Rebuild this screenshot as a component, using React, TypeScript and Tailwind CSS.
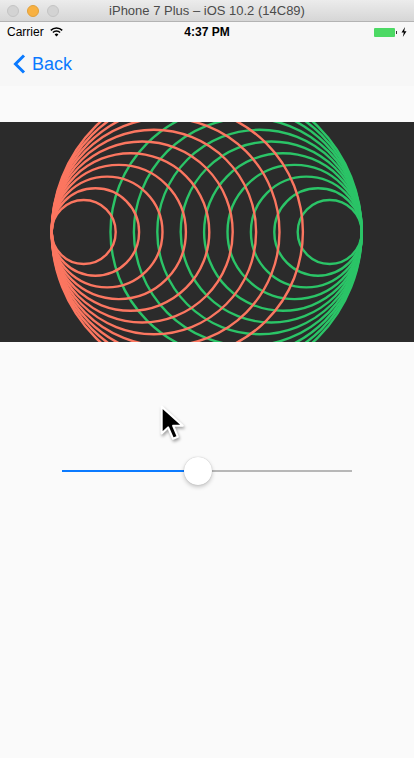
import React from "react";

const RED = "#fb7660";
const GREEN = "#2bc467";
const LEFT = 51.7;
const RIGHT = 361.7;
const CY = 110;

// radii grow evenly; the two largest are only half drawn (mid animation)
const full = Array.from({ length: 9 }, (_, k) => 32 + 11.7 * k);
const partial = [137.3, 149];

function Rings() {
  return (
    <svg width="414" height="220" viewBox="0 0 414 220" className="block">
      <g fill="none" stroke={GREEN} strokeWidth="2.4">
        {full.map((r) => (
          <circle key={r} cx={RIGHT - r} cy={CY} r={r} />
        ))}
        {partial.map((r) => (
          <path key={r} d={`M${RIGHT - r} ${CY - r} A${r} ${r} 0 0 1 ${RIGHT - r} ${CY + r}`} />
        ))}
      </g>
      <g fill="none" stroke={RED} strokeWidth="2.4">
        {full.map((r) => (
          <circle key={r} cx={LEFT + r} cy={CY} r={r} />
        ))}
        {partial.map((r) => (
          <path key={r} d={`M${LEFT + r} ${CY - r} A${r} ${r} 0 0 0 ${LEFT + r} ${CY + r}`} />
        ))}
      </g>
    </svg>
  );
}

function TitleBar() {
  return (
    <div className="relative flex h-[22px] items-center justify-center border-b border-[#b3b3b3] bg-gradient-to-b from-[#ececec] to-[#d6d6d6]">
      <div className="absolute left-[7px] top-[5px] flex gap-[8px]">
        <span className="h-[12px] w-[12px] rounded-full border border-[#c4c4c4] bg-[#d3d3d3]" />
        <span className="h-[12px] w-[12px] rounded-full border border-[#e1a03a] bg-[#f8b142]" />
        <span className="h-[12px] w-[12px] rounded-full border border-[#c4c4c4] bg-[#d3d3d3]" />
      </div>
      <span className="text-[13px] text-[#4b4b4b]">iPhone 7 Plus – iOS 10.2 (14C89)</span>
    </div>
  );
}

function StatusBar() {
  return (
    <div className="relative flex h-[20px] items-center bg-[#f7f7f7] px-[7px] text-[12px] text-black">
      <span>Carrier</span>
      <svg width="13" height="10" viewBox="0 0 13 10" className="ml-[6px]">
        <path d="M0.8 3.4a8 8 0 0 1 11.4 0" fill="none" stroke="#000" strokeWidth="1.5" />
        <path d="M2.9 5.5a5 5 0 0 1 7.2 0" fill="none" stroke="#000" strokeWidth="1.5" />
        <path d="M4.6 7.4a2.6 2.6 0 0 1 3.8 0L6.5 9.4z" fill="#000" />
      </svg>
      <span className="absolute left-1/2 -translate-x-1/2 font-semibold">4:37 PM</span>
      <div className="ml-auto flex items-center">
        <span className="h-[9px] w-[21px] rounded-[1px] bg-[#4cd964]" />
        <span className="ml-[1px] h-[3px] w-[1px] bg-[#333]" />
        <svg width="6" height="10" viewBox="0 0 6 10" className="ml-[4px]">
          <path d="M4 0L0.5 5.6H2.8L1.8 10L5.5 4.2H3.2z" fill="#000" />
        </svg>
      </div>
    </div>
  );
}

function NavBar() {
  return (
    <div className="flex h-[44px] items-center bg-[#f7f7f7] pl-[13px] text-[#0a7aff]">
      <svg width="13" height="20" viewBox="0 0 13 20">
        <path d="M11 1.5L2.5 10L11 18.5" fill="none" stroke="#0a7aff" strokeWidth="3" />
      </svg>
      <span className="ml-[6px] text-[18px] leading-none">Back</span>
    </div>
  );
}

function Slider({ value }: { value: number }) {
  return (
    <div className="relative mx-[62px] flex h-[28px] items-center">
      <div className="flex h-[2px] w-full">
        <div className="h-full bg-[#0a7aff]" style={{ width: `${value * 100}%` }} />
        <div className="h-full flex-1 bg-[#b7b7b7]" />
      </div>
      <div
        className="absolute top-0 h-[28px] w-[28px] -translate-x-1/2 rounded-full bg-white shadow-[0_2px_4px_rgba(0,0,0,0.22),0_0_1px_rgba(0,0,0,0.25)]"
        style={{ left: `${value * 100}%` }}
      />
    </div>
  );
}

function Cursor() {
  return (
    <svg
      width="26"
      height="38"
      viewBox="0 0 16 23.4"
      className="absolute left-[160px] top-[405px] drop-shadow-[1px_2px_1.5px_rgba(0,0,0,0.35)]"
    >
      <path
        d="M1 1L1 17.5L5 13.8L8 20.8L11 19.6L8.1 12.8L14 12.8Z"
        fill="#000"
        stroke="#fff"
        strokeWidth="1.3"
        strokeLinejoin="round"
      />
    </svg>
  );
}

export default function App() {
  return (
    <div className="relative h-[758px] w-[414px] overflow-hidden bg-[#fafafa] font-['Liberation_Sans',Arial,sans-serif]">
      <TitleBar />
      <StatusBar />
      <NavBar />
      <div className="mt-[36px] h-[220px] bg-[#2b2b2b]">
        <Rings />
      </div>
      <div className="mt-[115px]">
        <Slider value={0.47} />
      </div>
      <Cursor />
    </div>
  );
}
